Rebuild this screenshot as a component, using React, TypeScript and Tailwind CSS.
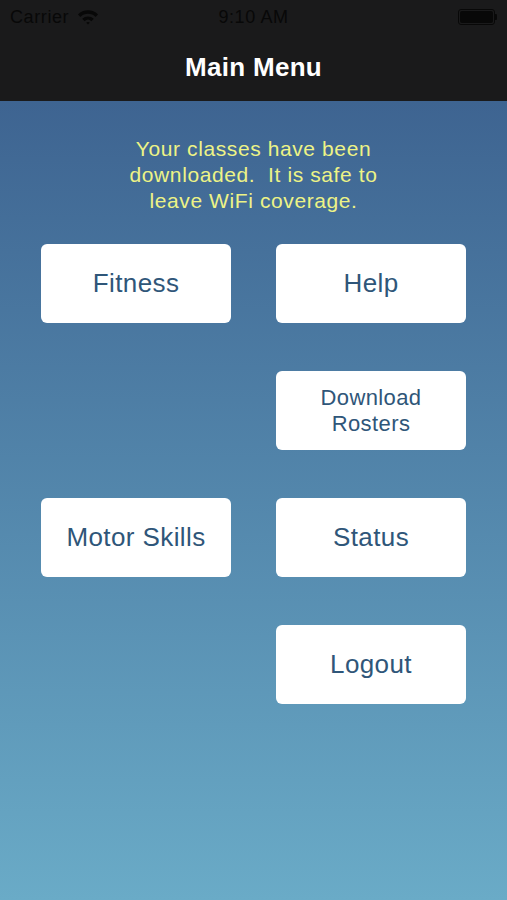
const font = { fontFamily: "'Liberation Sans', Arial, sans-serif" };

function MenuButton({ label, small }: { label: React.ReactNode; small?: boolean }) {
  return (
    <button
      className={`h-[79px] w-[190px] rounded-[6px] bg-white text-[#2f5679] flex items-center justify-center text-center ${
        small ? "text-[22px] leading-[26px] tracking-[0.4px]" : "text-[26px] tracking-[0.4px]"
      }`}
    >
      {label}
    </button>
  );
}

export default function App() {
  return (
    <div className="w-[507px] h-[900px] flex flex-col overflow-hidden" style={font}>
      {/* Status + nav bar */}
      <div className="bg-[#1a1a1b] h-[101px] flex flex-col shrink-0">
        <div className="h-[34px] flex items-center px-[10px] relative text-[#080808] text-[18px] tracking-[0.6px]">
          <span>Carrier</span>
          <svg width="22" height="16" viewBox="0 0 22 16" className="ml-[8px]">
            <path d="M1 5.5 A14 14 0 0 1 21 5.5 L18.6 8 A10.6 10.6 0 0 0 3.4 8 Z" fill="#080808" />
            <path d="M5.2 9.8 A8.4 8.4 0 0 1 16.8 9.8 L14.4 12.2 A5 5 0 0 0 7.6 12.2 Z" fill="#080808" />
            <path d="M9.2 13.8 A2.6 2.6 0 0 1 12.8 13.8 L11 15.6 Z" fill="#080808" />
          </svg>
          <span className="absolute left-0 right-0 text-center pointer-events-none">9:10 AM</span>
          <div className="ml-auto flex items-center">
            <div className="w-[37px] h-[16px] rounded-[3px] border border-[#080808] p-[1px]">
              <div className="w-full h-full rounded-[2px] bg-[#080808]" />
            </div>
            <div className="w-[2px] h-[6px] bg-[#080808] rounded-r-[1px]" />
          </div>
        </div>
        <div className="flex-1 flex items-center justify-center text-white text-[26px] font-bold tracking-[0.3px] pb-[1px]">
          Main Menu
        </div>
      </div>

      {/* Content */}
      <div className="flex-1 bg-gradient-to-b from-[#3e6491] to-[#6aabc7] flex flex-col items-center">
        <p className="mt-[35px] text-center text-[21px] leading-[26px] tracking-[0.6px] text-[#edf386]">
          Your classes have been
          <br />
          downloaded.&nbsp; It is safe to
          <br />
          leave WiFi coverage.
        </p>
        <div className="mt-[30px] grid grid-cols-[190px_190px] gap-x-[45px] gap-y-[48px]">
          <MenuButton label="Fitness" />
          <MenuButton label="Help" />
          <div />
          <MenuButton
            small
            label={
              <>
                Download
                <br />
                Rosters
              </>
            }
          />
          <MenuButton label="Motor Skills" />
          <MenuButton label="Status" />
          <div />
          <MenuButton label="Logout" />
        </div>
      </div>
    </div>
  );
}
